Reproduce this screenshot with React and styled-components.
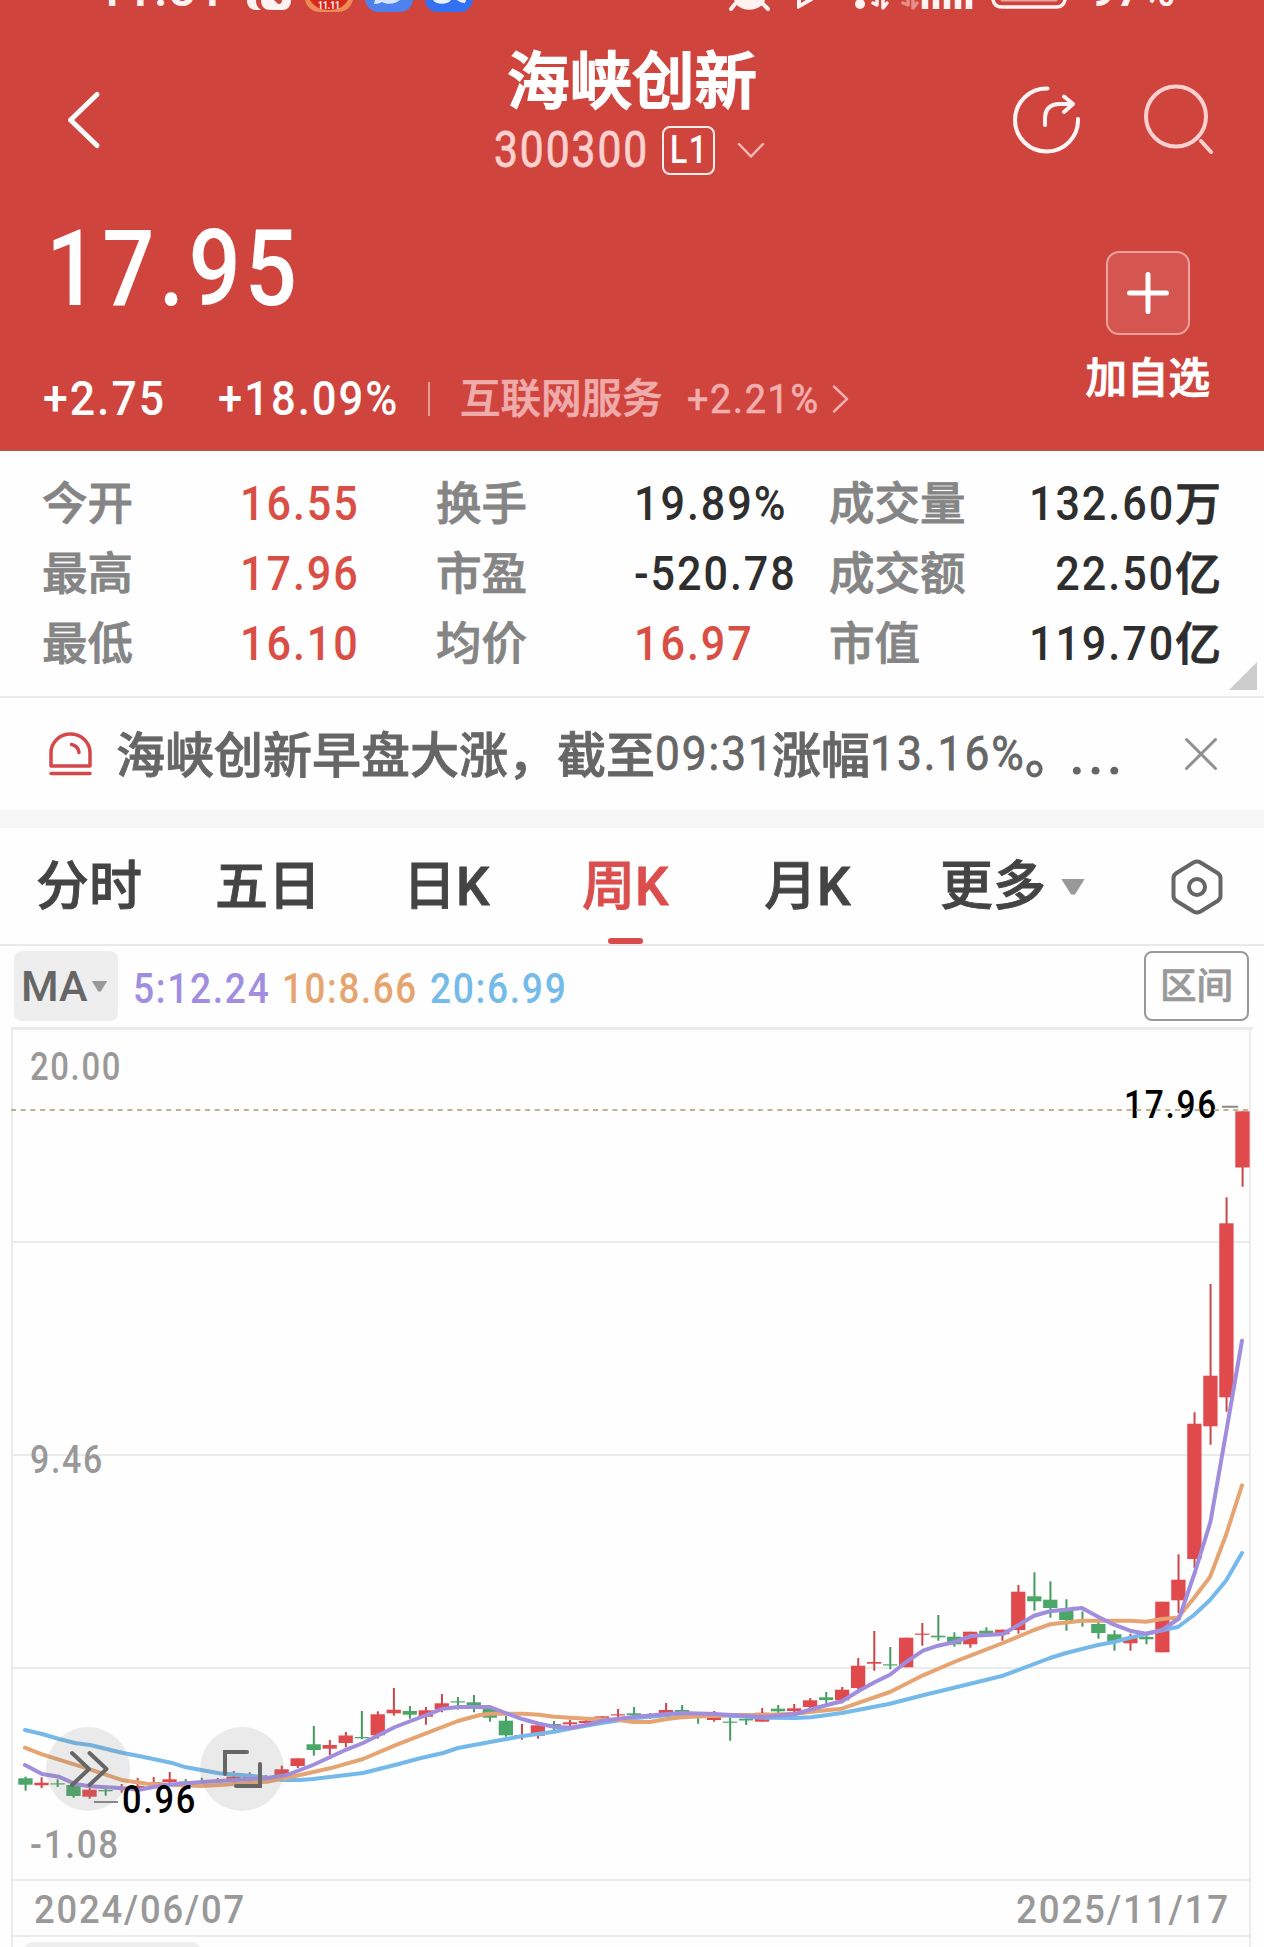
import React from 'react';
import styled, { createGlobalStyle } from 'styled-components';

const RED = '#cf453e';
const UP = '#e04a4c';
const DOWN = '#4ba767';

const Global = createGlobalStyle`
  * { box-sizing: border-box; }
  body { margin: 0; background: #fefefe; }
`;

const Page = styled.div`
  width: 1264px;
  height: 1947px;
  overflow: hidden;
  background: #fefefe;
  font-family: Roboto, "Noto Sans CJK SC", sans-serif;
  font-weight: 500;
  color: #2e2e2e;
  white-space: nowrap;
`;

const Han = styled.span`
  font-size: ${(p) => p.$size}px;
  line-height: ${(p) => p.$line || 50}px;
  padding-top: ${(p) => p.$drop || 0}px;
  color: ${(p) => p.$color || 'inherit'};
  -webkit-text-stroke: ${(p) => p.$stroke || 0.018}em currentColor;
`;

/* narrow DIN-like figures */
const Num = styled.span`
  display: inline-block;
  font-size: ${(p) => p.$size || 49}px;
  line-height: ${(p) => p.$line || 50}px;
  font-weight: ${(p) => (p.$light ? 400 : 500)};
  -webkit-text-stroke: ${(p) => (p.$light ? 0.016 : 0)}em currentColor;
  letter-spacing: 0.045em;
  color: ${(p) => p.$color || 'inherit'};
  transform: scaleX(${(p) => p.$scale || 0.88});
  transform-origin: ${(p) => (p.$end ? 'right' : 'left')} center;
`;

const Icon = styled.svg`
  display: block;
  flex: none;
  fill: none;
  stroke-linecap: round;
  stroke-linejoin: round;
`;

/* ---------- header ---------- */
const Header = styled.header`
  height: 451px;
  background: ${RED};
  border-bottom: 1px solid #b25553;
  color: #fff;
`;

const StatusBar = styled.div`
  display: flex;
  align-items: flex-end;
  height: 12px;
  overflow: hidden;
  padding-left: 98px;
`;

const StatusText = styled.span`
  width: ${(p) => p.$width}px;
  flex: none;
  margin-bottom: -1px;
  font-size: 44px;
  line-height: 44px;
  font-weight: 700;
  letter-spacing: ${(p) => p.$track}px;
  color: #fff3f1;
`;

const TitleBar = styled.div`
  display: grid;
  grid-template-columns: 1fr auto 1fr;
  height: 168px;
  padding: 0 44px;
`;

const BackSlot = styled.div`
  padding: 76px 0 0 20px;
`;

const TitleStack = styled.div`
  display: flex;
  flex-direction: column;
  align-items: center;
  padding-top: 37px;
`;

const CodeRow = styled.div`
  display: flex;
  align-items: center;
  height: 50px;
  margin-top: 8px;
  margin-right: 6px;
`;

const LevelBadge = styled.span`
  width: 53px;
  height: 49px;
  margin: 0 22px 0 9px;
  padding-left: 6px;
  border: 2px solid #ffeeec;
  border-radius: 8px;
`;

const Actions = styled.div`
  display: flex;
  justify-content: flex-end;
  gap: 60px;
  padding: 71px 6px 0 0;
`;

const Quote = styled.div`
  display: flex;
  justify-content: space-between;
  padding: 32px 54px 0 43px;
`;

const QuoteMain = styled.div`
  display: flex;
  flex-direction: column;
`;

const PriceRow = styled.div`
  height: 110px;
  padding: 2px 0 0 3px;
`;

const ChangeRow = styled.div`
  display: flex;
  align-items: center;
  height: 50px;
  margin-top: 52px;
`;

const Cell = styled.div`
  width: ${(p) => p.$width}px;
  flex: none;
  display: flex;
  align-items: center;
`;

const Divider = styled.span`
  width: 2px;
  height: 34px;
  margin-right: 30px;
  background: #e99d99;
`;

const AddColumn = styled.div`
  display: flex;
  flex-direction: column;
  align-items: center;
  padding-top: 39px;
`;

const AddButton = styled.div`
  display: flex;
  align-items: center;
  justify-content: center;
  width: 84px;
  height: 84px;
  margin-bottom: 19px;
  border: 2px solid #eda09c;
  border-radius: 13px;
  background: #d55651;
`;

/* ---------- figures ---------- */
const Stats = styled.section`
  position: relative;
  display: grid;
  grid-template-columns: 198px 196px 198px 195px 135px 257px;
  grid-auto-rows: 70px;
  height: 247px;
  padding: 17px 0 0 42px;
  border-bottom: 2px solid #ebebeb;
`;

const Label = styled.span`
  font-size: 45.5px;
  line-height: 74px;
  color: #858585;
  -webkit-text-stroke: 0.018em currentColor;
`;

const Value = styled.span`
  padding-top: 1px;
  color: ${(p) => (p.$up ? '#d94f45' : '#2e2e2e')};
  text-align: ${(p) => (p.$end ? 'right' : 'left')};
`;

const Corner = styled.span`
  position: absolute;
  right: 7px;
  bottom: 6px;
  width: 28px;
  height: 28px;
  background: #ccc;
  clip-path: polygon(100% 0, 100% 100%, 0 100%);
`;

/* ---------- news strip ---------- */
const News = styled.section`
  display: flex;
  align-items: center;
  height: 130px;
  padding: 0 46px 0 48px;
  border-bottom: 18px solid #f7f7f7;
  color: #666;
`;

const NewsText = styled.div`
  flex: 1;
  display: flex;
  align-items: center;
  padding-left: 24px;
`;

/* ---------- period tabs ---------- */
const Tabs = styled.nav`
  display: grid;
  grid-template-columns: 179px 188px 179px 182px 176px 231px 50px;
  height: 118px;
  padding-left: 36px;
  border-bottom: 2px solid #e9e9e9;
`;

const Tab = styled.div`
  position: relative;
  display: flex;
  align-items: center;
  justify-self: start;
  padding-top: 1px;
  font-size: 53px;
  line-height: 60px;
  color: ${(p) => (p.$active ? '#dc4d4d' : '#444')};
  -webkit-text-stroke: 0.016em currentColor;

  &::after {
    content: '';
    display: ${(p) => (p.$active ? 'block' : 'none')};
    position: absolute;
    left: 50%;
    bottom: 0;
    width: 35px;
    height: 6px;
    margin-left: -17px;
    border-radius: 3px;
    background: #d84c4c;
  }
`;

const Caret = styled.span`
  width: ${(p) => p.$w}px;
  height: ${(p) => p.$h}px;
  margin-left: ${(p) => p.$gap}px;
  background: #999;
  clip-path: polygon(0 0, 100% 0, 58% 100%, 42% 100%);
`;

/* ---------- average row ---------- */
const Averages = styled.div`
  display: flex;
  align-items: center;
  height: 81px;
  padding: 0 15px 1px 14px;
`;

const Picker = styled.div`
  display: flex;
  align-items: center;
  width: 104px;
  height: 70px;
  padding-left: 7px;
  margin-right: 15px;
  border-radius: 8px;
  background: #eee;
  color: #666;
  font-size: 43px;
`;

const Average = styled(Cell)`
  padding-top: 5px;
`;

const RangeButton = styled.div`
  width: 105px;
  height: 70px;
  margin-left: auto;
  border: 2px solid #999;
  border-radius: 8px;
  text-align: center;
  font-size: 36.5px;
  line-height: 67px;
  color: #999;
  -webkit-text-stroke: 0.018em currentColor;
`;

const ChartSvg = styled.svg`
  display: block;
`;

const ChartText = styled.text`
  font-family: Roboto, sans-serif;
  font-weight: 500;
  letter-spacing: 0.05em;
`;

/* [bodyTop, bodyBottom, wickTop, wickBottom, rising] */
const candles = [
  [1778.3, 1784.7, 1776.7, 1790.7, 0], [1782.7, 1785.3, 1777.3, 1788, 1], [1783.3, 1784.5, 1779.3, 1787, 0],
  [1785, 1796, 1783, 1797.7, 0], [1789.7, 1796.7, 1788, 1798.7, 1], [1790, 1791.3, 1787, 1795.7, 0],
  [1787.5, 1789, 1784, 1792.7, 1], [1786, 1788, 1778, 1789, 1], [1782, 1785, 1777, 1786, 1],
  [1779.3, 1782, 1772, 1784, 1], [1781.5, 1783, 1779, 1785, 0], [1781, 1783, 1777.7, 1784, 0],
  [1780, 1782, 1778, 1783, 1], [1776.5, 1779, 1771, 1781, 1], [1777, 1779, 1772.3, 1780, 1],
  [1777, 1779, 1775, 1781, 0], [1769.3, 1775, 1765.7, 1776, 1], [1758.3, 1766, 1758.3, 1768, 1],
  [1744.3, 1750, 1726, 1755.7, 0], [1745, 1748.7, 1740, 1755, 1], [1735.5, 1743, 1732, 1747.3, 1],
  [1737, 1738.3, 1711, 1739.3, 0], [1714.3, 1735.3, 1711.3, 1738.7, 1], [1709.7, 1713.3, 1688, 1715.7, 1],
  [1711, 1714.7, 1706, 1718.7, 0], [1710.3, 1716.7, 1707, 1724.7, 1], [1703.3, 1709.3, 1694, 1712.3, 1],
  [1701.3, 1702.5, 1697, 1709.7, 0], [1702.3, 1705.7, 1695, 1712.3, 0], [1708, 1717.7, 1706, 1721.7, 0],
  [1720.7, 1735.3, 1716, 1736.7, 0], [1735, 1736.3, 1724, 1739.7, 1], [1725.3, 1735.7, 1723.3, 1738.7, 1],
  [1724, 1725.3, 1721, 1730.7, 0], [1722.3, 1724.3, 1719.7, 1728, 1], [1721, 1723, 1718.3, 1725, 1],
  [1716.3, 1718.5, 1716, 1722, 1], [1714.3, 1715.5, 1709, 1718, 1], [1713.3, 1715, 1707, 1717, 0],
  [1714.5, 1717, 1713, 1719, 0], [1710, 1713, 1703, 1715, 1], [1710, 1712.7, 1705, 1714, 0],
  [1716.5, 1718, 1714, 1723.7, 0], [1717.3, 1720, 1711, 1721.7, 1], [1721.6, 1722.8, 1717, 1740.7, 0],
  [1719, 1720.5, 1716, 1725, 0], [1712.7, 1721.7, 1708, 1721.7, 1], [1708.7, 1711.3, 1705, 1713.3, 0],
  [1708.3, 1711, 1704, 1712.5, 1], [1700.3, 1707, 1698, 1708, 1], [1697.3, 1700, 1692, 1703.5, 0],
  [1689.7, 1700.3, 1687, 1703.3, 1], [1665.7, 1688, 1658, 1689, 1], [1662, 1663.7, 1631, 1670.7, 1],
  [1664.3, 1665.5, 1647, 1669.3, 0], [1637.7, 1667.3, 1637.7, 1667.3, 1], [1633.6, 1634.8, 1623, 1645.7, 1],
  [1635.7, 1637.3, 1615, 1640.7, 0], [1636.7, 1644.3, 1632.3, 1646.7, 0], [1631.7, 1644.3, 1631.7, 1647.7, 1],
  [1630.7, 1633.7, 1627.3, 1635, 0], [1629.7, 1634.3, 1629.7, 1640.7, 1], [1591.7, 1630, 1585, 1633.7, 1],
  [1596.3, 1601.3, 1572.3, 1610.7, 0], [1599.7, 1608, 1581.3, 1617.7, 0], [1610.7, 1620, 1599.3, 1630.7, 0],
  [1620, 1621.5, 1611.3, 1626.7, 0], [1624, 1633, 1622, 1638.7, 0], [1634.3, 1641.7, 1630.3, 1650.7, 0],
  [1637.7, 1643.3, 1633.7, 1650.7, 1], [1637, 1639.3, 1635.7, 1644.3, 0], [1601.7, 1652.3, 1601.7, 1652.3, 1],
  [1579.7, 1600.3, 1554.3, 1613, 1], [1423.7, 1559, 1412.3, 1568, 1], [1375.7, 1426.3, 1284, 1444.7, 1],
  [1223.3, 1397.3, 1197.3, 1411.7, 1], [1111.3, 1167.5, 1111.3, 1186.7, 1],
];

const ma20 =
  '25,1730 42,1734 59,1739 75,1743 90,1745 123,1753 139,1756 171,1762.7 186,1767.3 219,1773.3 260,1776.7 283,1780 300,1780 313,1779 363,1773 395,1765 420,1758.3 443,1753 458,1748 490,1742 523,1736 554,1731.7 573,1728 603,1722.7 633,1718.3 667,1715.3 682,1713.7 730,1715.7 763,1717.7 795,1718 811,1717.3 842,1713 890,1703.7 923,1695.3 954,1687.7 1003,1675.7 1050,1658 1066,1653 1098,1645 1114,1642 1130,1637.7 1162,1630.3 1178,1627 1194,1615 1210,1600 1226,1580.7 1242,1553';
const ma10 =
  '25,1747.7 42,1754.3 87,1768.3 123,1780.3 147,1783.7 200,1786 220,1785 267,1781.7 300,1775 330,1768.3 363,1759 395,1745.3 420,1735.7 458,1721 480,1715 490,1713.7 523,1713.7 539,1714.7 554,1716.7 587,1718.7 619,1720 633,1722 650,1722 667,1719 682,1717.3 730,1715 763,1715 795,1713.7 826,1710.3 842,1708.7 859,1702.7 890,1692 923,1675.3 954,1662 971,1655.3 1003,1643 1034,1630 1050,1624.3 1082,1620.7 1130,1620.7 1146,1621.7 1162,1619 1178,1617.5 1194,1598 1210,1577 1226,1535 1242,1485.3';
const ma5 =
  '25,1765 42,1774 59,1776.7 75,1784 90,1786.3 123,1788.3 139,1789.7 163,1785.3 202,1782 235,1780 267,1778 287,1775 313,1765 347,1749.3 363,1743 395,1727 420,1717.5 443,1708.7 458,1707 490,1707 507,1713.5 523,1719.3 539,1723.7 554,1726.7 571,1727.7 587,1724.7 603,1720.7 633,1717 667,1714 682,1713 715,1714 763,1717 795,1714 826,1705.3 842,1701.3 859,1690.7 875,1682 890,1674.7 907,1661.3 923,1650.7 938,1645.7 954,1642.3 971,1636 1003,1634 1019,1624.7 1034,1615.7 1050,1611.3 1082,1608 1098,1616.7 1114,1624.7 1130,1630.7 1146,1633.7 1162,1630 1179,1618.5 1195,1572 1210.5,1521.7 1226,1433 1242,1340.7';

function Chart() {
  return (
    <ChartSvg width="1264" height="920" viewBox="0 1027 1264 920">
      <g fill="#ebebeb">
        <rect x="11" y="1027" width="1242" height="3" />
        <rect x="11" y="1027" width="2" height="920" />
        <rect x="1249" y="1027" width="2" height="920" />
        {[1241, 1454, 1667, 1879, 1935].map((y) => (
          <rect key={y} x="12" y={y} width="1238" height="2" />
        ))}
      </g>
      <rect x="24" y="1942" width="177" height="30" rx="9" fill="#eee" />

      <g fill="#999" fontSize="39.5">
        <ChartText x="30" y="1080" textLength="92" lengthAdjust="spacingAndGlyphs">20.00</ChartText>
        <ChartText x="30" y="1473" textLength="74" lengthAdjust="spacingAndGlyphs">9.46</ChartText>
        <ChartText x="30" y="1858" textLength="90" lengthAdjust="spacingAndGlyphs">-1.08</ChartText>
        <ChartText x="34" y="1923" textLength="212" lengthAdjust="spacingAndGlyphs">2024/06/07</ChartText>
        <ChartText x="1016" y="1923" textLength="214" lengthAdjust="spacingAndGlyphs">2025/11/17</ChartText>
      </g>

      {candles.map(([top, bottom, high, low, rising], i) => {
        const cx = 25.4 + i * 16.013;
        return (
          <g key={i} fill={rising ? UP : DOWN}>
            <rect x={cx - 0.8} y={high} width="2" height={low - high} fill={rising ? '#c9474a' : '#459a60'} />
            <rect x={cx - 7.1} y={top} width="14.3" height={bottom - top} />
          </g>
        );
      })}

      <g fill="none" strokeWidth="4" strokeLinejoin="round" strokeLinecap="round">
        <polyline points={ma20} stroke="#74b9ea" />
        <polyline points={ma10} stroke="#e5a471" />
        <polyline points={ma5} stroke="#a18ddd" />
      </g>

      <g fontSize="38" fill="#000">
        <ChartText x="1124" y="1118" textLength="94" lengthAdjust="spacingAndGlyphs">17.96</ChartText>
        <ChartText x="122" y="1813" textLength="75" lengthAdjust="spacingAndGlyphs">0.96</ChartText>
      </g>
      <path d="M1222 1106.7h16M94 1802h24" stroke="#888" strokeWidth="2" />
      <path d="M11 1110h1239" stroke="#bfb290" strokeWidth="2" strokeDasharray="5 4.7" />

      <g fill="rgba(130,130,130,0.16)">
        <circle cx="88" cy="1769" r="42" />
        <circle cx="242" cy="1769" r="42" />
      </g>
      <g fill="none" stroke="#666" strokeWidth="4" strokeLinecap="round" strokeLinejoin="round">
        <path d="M72 1753l17 16-17 16M89.5 1753l17 16-17 16" />
        <path d="M225 1774v-22h22M236 1786h24v-22" strokeLinejoin="miter" />
      </g>
    </ChartSvg>
  );
}

function Status() {
  return (
    <StatusBar>
      <StatusText $width={148} $track={3}>11:31</StatusText>
      <Icon width="230" height="12" viewBox="246 0 230 12">
        <path d="M247 0c0 6 3 10 10 10h4c-4-3-5-6-5-10z" fill="#fff3f1" />
        <path d="M261 0c0 7 4 10 10 10h11c6 0 9-4 9-10h-9c0 4-3 5-5 3l-3-3z" fill="#fff3f1" />
        <path d="M305 0c2 8 8 12 15 12h18c8 0 13-5 15-12z" fill="#ef8a55" />
        <path d="M310 0c4 7 11 10 19 10s15-3 19-10z" fill="#d8291d" />
        <text x="329" y="9" textAnchor="middle" fontFamily="Roboto, sans-serif" fontSize="11.5" fontWeight="700" textLength="22" lengthAdjust="spacingAndGlyphs" fill="#fff">11.11</text>
        <path d="M365 0c2 8 7 12 14 12h20c8 0 13-4 14-12z" fill="#4e80ee" />
        <path d="M375 0l-1 4c4 0 6-1 8-2 5 3 14 2 18-2z" fill="#d6e5ff" />
        <path d="M425 0c1 8 6 12 13 12h22c7 0 12-5 13-12z" fill="#3470f2" />
        <path d="M433 0c3 5 15 5 18 0M457 0c2 2 5 3 8 3l1-3z" fill="#eaf2ff" />
      </Icon>
      <Icon width="602" height="12" viewBox="476 0 602 12">
        <path d="M734 0c4 13 27 13 31 0z" fill="#fff3f1" />
        <path d="M735 4l-4 5M763 4l5 5" stroke="#fff3f1" strokeWidth="4" />
        <path d="M798 0v8l14-8z" fill="#fff3f1" stroke="#fff3f1" strokeWidth="2" />
        <path d="M801 0v3l5-3z" fill="#cf453e" />
        <circle cx="860" cy="4" r="5" fill="#fff3f1" />
        <path d="M873 3l4 2V0M887 3l-4 5V0" stroke="#fff3f1" strokeWidth="3.500" />
        <path d="M903 3l5 2V0M917 3l-4 5V0" stroke="#e58e89" strokeWidth="3.500" />
        <path d="M925 0v9M936 0v9M947 0v9M958 0v9M969 0v9" stroke="#fff3f1" strokeWidth="6.500" strokeLinecap="butt" />
        <path d="M993 0c1 5 4 7 9 7h54c5 0 8-2 9-7" stroke="#fff3f1" strokeWidth="3.500" />
        <path d="M1002 0h54" stroke="#e9a4a0" strokeWidth="3" />
      </Icon>
      <StatusText $width={120} $track={1}>&nbsp;97%</StatusText>
    </StatusBar>
  );
}

const stats = [
  ['今开', '16.55', 1, '换手', '19.89%', 0, '成交量', '132.60', '万'],
  ['最高', '17.96', 1, '市盈', '-520.78', 0, '成交额', '22.50', '亿'],
  ['最低', '16.10', 1, '均价', '16.97', 1, '市值', '119.70', '亿'],
];

export default function App() {
  return (
    <Page>
      <Global />
      <Header>
        <Status />
        <TitleBar>
          <BackSlot>
            <Icon width="40" height="64" viewBox="64 88 40 64" stroke="#fff" strokeWidth="5">
              <path d="M97 94.500L70.500 120L97 145.500" />
            </Icon>
          </BackSlot>
          <TitleStack>
            <Han $size={62.500} $line={68} $stroke={0.03}>海峡创新</Han>
            <CodeRow>
              <Cell $width={159}><Num $size={50} $light $scale={0.852} $color="#fbd0cf">300300</Num></Cell>
              <LevelBadge><Num $size={38} $line={45} $scale={0.84}>L1</Num></LevelBadge>
              <Icon width="28" height="18" viewBox="0 0 28 18" stroke="#f6bab7" strokeWidth="2.500">
                <path d="M2 3l12 12.500L26 3" />
              </Icon>
            </CodeRow>
          </TitleStack>
          <Actions>
            <Icon width="72" height="72" viewBox="1010 83 72 72" stroke="#fff5f4" strokeWidth="4">
              <path d="M1047.500 88.500a31.500 31.500 0 1 0 30.500 30.500" />
              <path d="M1045 125v-6c0-10 5-15 15-15h12M1064 96.500l9 7.500-9 8" />
            </Icon>
            <Icon width="72" height="72" viewBox="1142 83 72 72" stroke="#fcd0cf" strokeWidth="4">
              <circle cx="1176" cy="116.500" r="30" />
              <path d="M1201 141l10 11" />
            </Icon>
          </Actions>
        </TitleBar>
        <Quote>
          <QuoteMain>
            <PriceRow><Num $size={106} $line={110} $scale={0.867}>17.95</Num></PriceRow>
            <ChangeRow>
              <Cell $width={175}><Num $scale={0.91}>+2.75</Num></Cell>
              <Cell $width={210}><Num $scale={0.89}>+18.09%</Num></Cell>
              <Divider />
              <Cell $width={227}><Han $size={40.500} $color="#f0abab">互联网服务</Han></Cell>
              <Cell $width={145}><Num $size={41} $light $scale={0.92} $color="#f3aeae">+2.21%</Num></Cell>
              <Icon width="18" height="30" viewBox="0 0 18 30" stroke="#f3aeae" strokeWidth="2.500">
                <path d="M2 2.500L15 15L2 27.500" />
              </Icon>
            </ChangeRow>
          </QuoteMain>
          <AddColumn>
            <AddButton>
              <Icon width="44" height="44" viewBox="0 0 44 44" stroke="#fff" strokeWidth="5">
                <path d="M22 3.500v37M3.500 22h37" />
              </Icon>
            </AddButton>
            <Han $size={41.500} $stroke={0.025}>加自选</Han>
          </AddColumn>
        </Quote>
      </Header>

      <Stats>
        {stats.map(([l1, v1, u1, l2, v2, u2, l3, v3, unit]) => (
          <React.Fragment key={l1}>
            <Label>{l1}</Label>
            <Value $up={u1}><Num $line={70}>{v1}</Num></Value>
            <Label>{l2}</Label>
            <Value $up={u2}><Num $line={70}>{v2}</Num></Value>
            <Label>{l3}</Label>
            <Value $end><Num $line={70} $end>{v3}</Num><Han $size={46} $line={70}>{unit}</Han></Value>
          </React.Fragment>
        ))}
        <Corner />
      </Stats>

      <News>
        <Icon width="44" height="44" viewBox="0 0 44 44" stroke="#d4474a" strokeWidth="3.500">
          <path d="M3 34V20.500a19.500 18.500 0 0 1 39 0V34zM3 41.500h39" />
          <path d="M23.500 12.500c5 1 7 4 7.500 8" />
        </Icon>
        <NewsText>
          <Han $size={49} $drop={5}>海峡创新早盘大涨，截至</Han>
          <Cell $width={117}><Num $light $scale={0.9}>09:31</Num></Cell>
          <Han $size={49} $drop={5}>涨幅</Han>
          <Cell $width={155}><Num $light $scale={0.905}>13.16%</Num></Cell>
          <Cell $width={44}><Han $size={49} $drop={5}>。</Han></Cell>
          <Num $size={60} $scale={0.97}>...</Num>
        </NewsText>
        <Icon width="34" height="34" viewBox="0 0 34 34" stroke="#909090" strokeWidth="3">
          <path d="M2.500 2.500l29 29M31.500 2.500l-29 29" />
        </Icon>
      </News>

      <Tabs>
        <Tab>分时</Tab>
        <Tab>五日</Tab>
        <Tab>日K</Tab>
        <Tab $active>周K</Tab>
        <Tab>月K</Tab>
        <Tab>更多<Caret $w={24} $h={16} $gap={15} /></Tab>
        <Tab>
          <Icon width="52" height="56" viewBox="0 0 52 56" stroke="#666" strokeWidth="4">
            <path d="M22.500 3.500q3.500-2 7 0L46.500 14q3 2 3 5v18q0 3-3 5L29.500 52.500q-3.500 2-7 0L5.500 42q-3-2-3-5V19q0-3 3-5z" />
            <circle cx="26" cy="28" r="8" />
          </Icon>
        </Tab>
      </Tabs>

      <Averages>
        <Picker>
          MA
          <Caret $w={16} $h={11} $gap={4} />
        </Picker>
        <Average $width={149}><Num $size={42} $color="#a28ee0" $scale={0.885}>5:12.24</Num></Average>
        <Average $width={148}><Num $size={42} $color="#e6a46f" $scale={0.875}>10:8.66</Num></Average>
        <Average $width={150}><Num $size={42} $color="#74bbea" $scale={0.885}>20:6.99</Num></Average>
        <RangeButton>区间</RangeButton>
      </Averages>

      <Chart />
    </Page>
  );
}
